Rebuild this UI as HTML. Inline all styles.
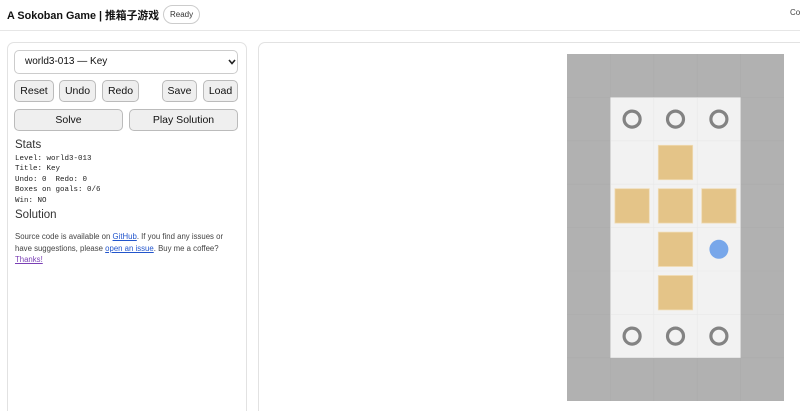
<!DOCTYPE html>
<html style="width:800px;height:411px;overflow:hidden"><head><meta charset="utf-8"><style>
body{margin:0;width:800px;height:411px;overflow:hidden;background:#fff;font-family:"Liberation Sans","Noto Sans CJK SC",sans-serif;position:relative}
.hdr{position:absolute;left:0;top:0;width:800px;height:30px;border-bottom:1px solid #e6e6e6}
.title{position:absolute;left:7px;top:7px;font-size:10.8px;font-weight:bold;color:#111}
.badge{position:absolute;left:163px;top:5px;height:17px;padding:0 6px;border:1px solid #ccc;border-radius:10px;font-size:8px;line-height:17px;color:#333;background:#fff}
.co{position:absolute;left:790px;top:8px;font-size:8px;color:#444}
.lp{position:absolute;left:7px;top:42px;width:238px;height:380px;border:1px solid #e2e2e2;border-radius:7px}
.rp{position:absolute;left:258px;top:42px;width:560px;height:380px;border:1px solid #e2e2e2;border-radius:7px}
.sel{position:absolute;left:14px;top:50px;height:22px;border:1px solid #ccc;border-radius:5px;background:#fff;font-size:10px;line-height:22px;padding-left:10px;color:#111;width:212px}
.b{position:absolute;height:22px;border:1px solid #bbb;border-radius:5px;background:#efefef;font-size:10.5px;text-align:center;line-height:21px;color:#111;box-sizing:border-box}
h3{position:absolute;margin:0;font-weight:normal;font-size:11.5px;color:#333;left:15px}
pre{position:absolute;left:15px;top:154px;margin:0;font-family:"Liberation Mono","DejaVu Sans Mono",monospace;font-size:7.5px;line-height:10.4px;color:#222}
.p{position:absolute;left:15px;top:231px;width:212px;font-size:7.8px;line-height:11.6px;color:#444}
a{color:#2255cc}
</style></head><body>
<div class="hdr"><div class="title">A Sokoban Game | 推箱子游戏</div><div class="badge">Ready</div><div class="co">Co</div></div>
<div class="lp"></div><div class="rp"></div>
<div class="sel">world3-013 — Key</div>
<svg style="position:absolute;left:228px;top:59px" width="8" height="6" viewBox="0 0 8 6"><path d="M1 1L4 4.5L7 1" fill="none" stroke="#222" stroke-width="1.6"/></svg>
<div class="b" style="left:14px;top:80px;width:40px">Reset</div>
<div class="b" style="left:59px;top:80px;width:37px">Undo</div>
<div class="b" style="left:102px;top:80px;width:37px">Redo</div>
<div class="b" style="left:162px;top:80px;width:35px">Save</div>
<div class="b" style="left:203px;top:80px;width:35px">Load</div>
<div class="b" style="left:14px;top:109px;width:109px">Solve</div>
<div class="b" style="left:129px;top:109px;width:109px">Play Solution</div>
<h3 style="top:139px">Stats</h3>
<pre>Level: world3-013
Title: Key
Undo: 0  Redo: 0
Boxes on goals: 0/6
Win: NO</pre>
<h3 style="top:209px">Solution</h3>
<div class="p">Source code is available on <a href="#">GitHub</a>. If you find any issues or have suggestions, please <a href="#">open an issue</a>. Buy me a coffee? <a href="#" style="color:#7a3fb5">Thanks!</a></div>
<svg style="position:absolute;left:567px;top:54px" width="217" height="347" viewBox="0 0 217 347">
<rect width="217" height="347" fill="#b1b1b1"/>
<g stroke="#acacac" stroke-width="0.6">
<path d="M43.4 0V347M86.8 0V347M130.2 0V347M173.6 0V347M0 43.4H217M0 86.8H217M0 130.2H217M0 173.6H217M0 217H217M0 260.4H217M0 303.8H217"/></g>
<rect x="43.4" y="43.4" width="130.2" height="260.4" fill="#f2f2f2"/>
<g stroke="#e8e8e8" stroke-width="0.6"><path d="M86.8 43.4V303.8M130.2 43.4V303.8M43.4 86.8H173.6M43.4 130.2H173.6M43.4 173.6H173.6M43.4 217H173.6M43.4 260.4H173.6"/></g>
<g fill="none" stroke="#838383" stroke-width="3.2">
<circle cx="65.1" cy="65.1" r="8"/><circle cx="108.5" cy="65.1" r="8"/><circle cx="151.9" cy="65.1" r="8"/>
<circle cx="65.1" cy="282.1" r="8"/><circle cx="108.5" cy="282.1" r="8"/><circle cx="151.9" cy="282.1" r="8"/></g>
<g fill="#e4c488" stroke="#f0dcb5" stroke-width="0.8">
<rect x="91.3" y="91.3" width="34.4" height="34.4"/>
<rect x="47.9" y="134.7" width="34.4" height="34.4"/><rect x="91.3" y="134.7" width="34.4" height="34.4"/><rect x="134.7" y="134.7" width="34.4" height="34.4"/>
<rect x="91.3" y="178.1" width="34.4" height="34.4"/><rect x="91.3" y="221.5" width="34.4" height="34.4"/></g>
<circle cx="151.9" cy="195.3" r="9.5" fill="#78a7ea"/>
</svg>
</body></html>
